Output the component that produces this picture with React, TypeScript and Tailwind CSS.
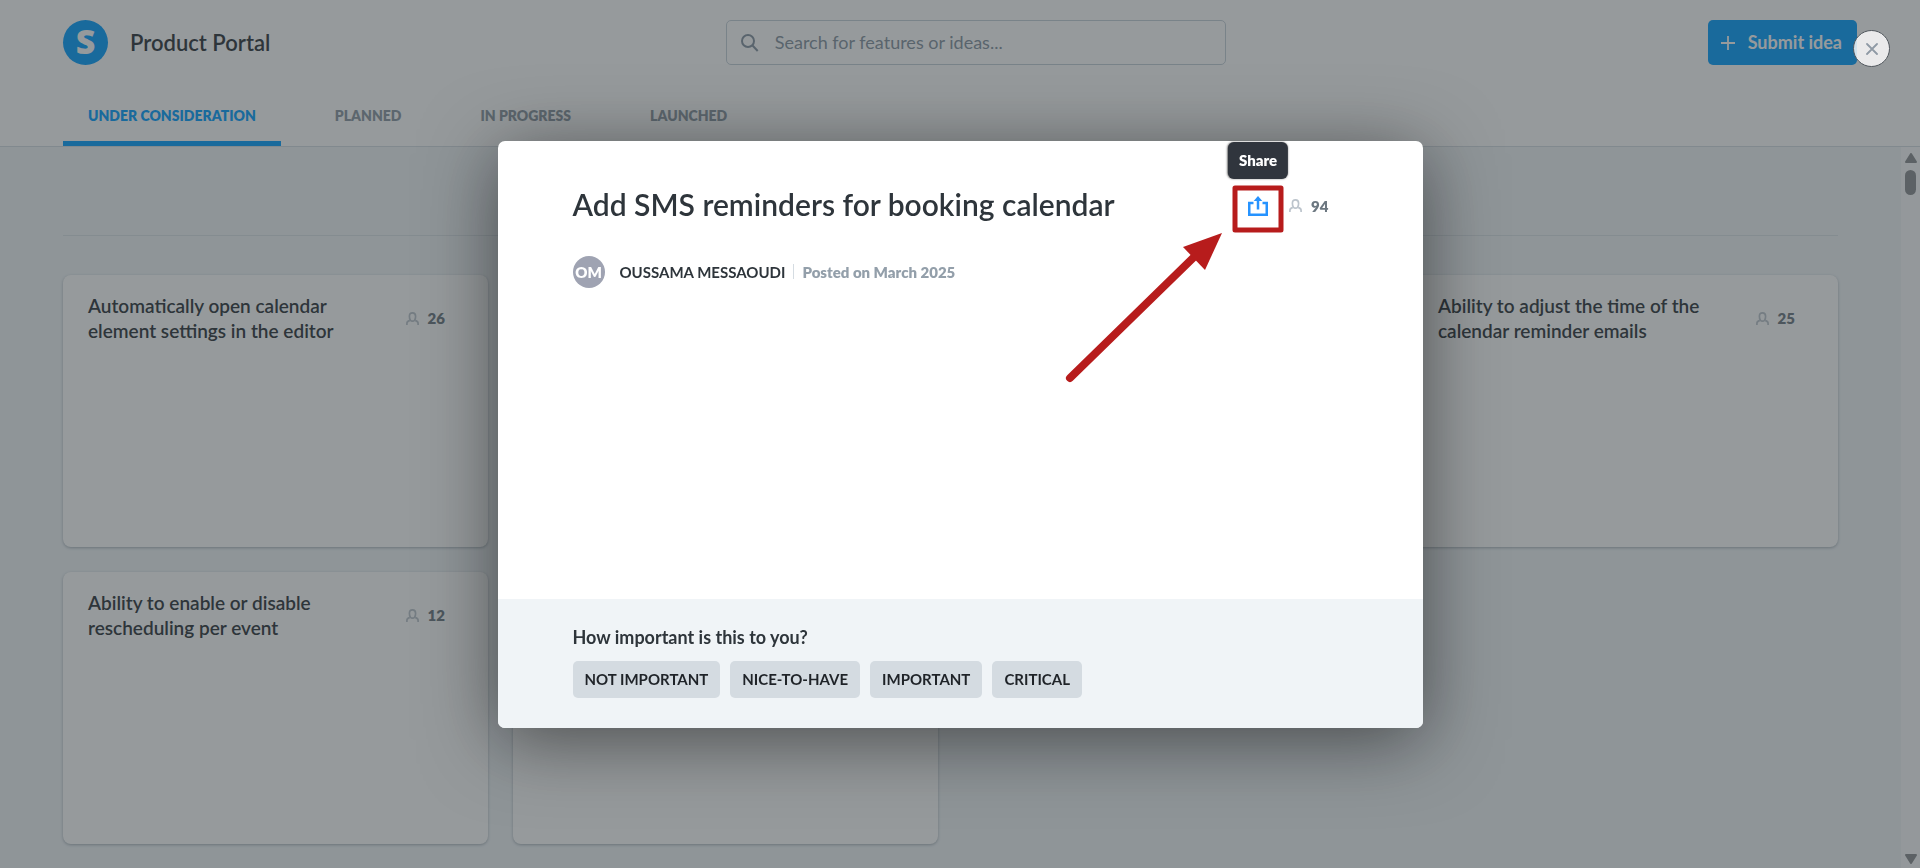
import React, { FunctionComponent } from "react";

type Idea = {
  id: number;
  title: string;
  votes: number | null;
};

const TABS = ["Under consideration", "Planned", "In progress", "Launched"];

const IMPORTANCE = ["Not important", "Nice-to-have", "Important", "Critical"];

const IDEAS: Idea[] = [
  { id: 1, title: "Automatically open calendar element settings in the editor", votes: 26 },
  { id: 2, title: "", votes: null },
  { id: 3, title: "", votes: null },
  { id: 4, title: "Ability to adjust the time of the calendar reminder emails", votes: 25 },
  { id: 5, title: "Ability to enable or disable rescheduling per event", votes: 12 },
  { id: 6, title: "", votes: null },
];

const PersonIcon: FunctionComponent<{ className?: string }> = ({ className }) => (
  <svg viewBox="0 0 13 13" className={className} fill="none" stroke="currentColor" strokeWidth="1.700" aria-hidden="true">
    <path d="M4.400 8.200C3.500 7.200 3.400 6 3.400 4.300 3.400 2 4.600.9 6.500.9s3.100 1.100 3.100 3.400c0 1.700-.1 2.900-1 3.900-.5.6-1.200.9-2.100.9s-1.600-.3-2.100-.9Z" />
    <path d="M.9 13v-1.600c0-1.400.8-2.300 2.900-3M12.100 13v-1.600c0-1.400-.8-2.300-2.900-3" />
  </svg>
);

const SearchIcon = () => (
  <svg viewBox="0 0 18 18" className="size-[18px]" fill="none" stroke="currentColor" strokeWidth="2" aria-hidden="true">
    <circle cx="7" cy="7" r="6" />
    <path d="m11.300 11.300 5.400 5.700" />
  </svg>
);

const ShareIcon = () => (
  <svg viewBox="0 0 20 20" className="size-5" fill="none" stroke="currentColor" strokeWidth="2.500" aria-hidden="true">
    <path d="M5.500 7H1.250v11.750h17.500V7H14.500" />
    <path d="M10 13.500V3" />
    <path d="m10 0 4.300 5H5.700Z" fill="currentColor" stroke="none" />
  </svg>
);

const Votes: FunctionComponent<{ count: number }> = ({ count }) => (
  <div className="flex items-center gap-[9px] text-[15px] leading-5 font-extrabold text-[#6c7780]">
    <PersonIcon className="size-[13px] text-[#bcc4cc]" />
    {count}
  </div>
);

const IdeaCard: FunctionComponent<{ idea: Idea }> = ({ idea }) => (
  <li className="h-[272px] rounded-lg bg-white px-[25px] py-[18px] shadow-[0_1px_3px_rgba(60,80,95,0.4)]">
    {idea.votes !== null && (
      <div className="flex items-center justify-between">
        <h3 className="max-w-[270px] text-[19px] leading-[25px] font-semibold text-[#2e353b]">{idea.title}</h3>
        <div className="mr-[18px]">
          <Votes count={idea.votes} />
        </div>
      </div>
    )}
  </li>
);

const Header = () => (
  <header className="border-b border-[#d5dce2] bg-white px-[63px]">
    <div className="grid grid-cols-[1.05fr_500px_1fr] items-center pt-5">
      <div className="flex items-center gap-[22px]">
        <div className="flex size-[45px] items-center justify-center rounded-full bg-[#059eff] pb-1 font-['Open_Sans'] text-[34px] leading-none font-extrabold text-white">
          S
        </div>
        <h1 className="text-[22px] leading-7 font-semibold text-[#2e353b]">Product Portal</h1>
      </div>
      <label className="flex h-[45px] items-center gap-4 rounded-[5px] border border-[#c5d0d9] px-[14px] text-[#8593a0]">
        <SearchIcon />
        <input
          type="text"
          aria-label="Search"
          placeholder="Search for features or ideas..."
          className="min-w-0 flex-1 text-[18px] outline-none placeholder:text-[#8593a0]"
        />
      </label>
      <button
        type="button"
        className="flex h-[45px] items-center gap-[13px] justify-self-end rounded-[5px] bg-[#059eff] pr-[15px] pl-[13px] text-[18px] font-bold text-white"
      >
        <svg viewBox="0 0 14 14" className="size-[14px]" stroke="currentColor" strokeWidth="1.8" aria-hidden="true">
          <path d="M7 0v14M0 7h14" />
        </svg>
        Submit idea
      </button>
    </div>
    <nav className="flex gap-[29px] pt-[30px]">
      {TABS.map((tab, i) => (
        <a
          key={tab}
          href="#"
          className={
            i === 0
              ? "border-b-[5px] border-[#059eff] px-[25px] pt-[11px] pb-[15px] text-[14px] leading-5 font-extrabold text-[#059eff] uppercase"
              : "border-b-[5px] border-transparent px-[25px] pt-[11px] pb-[15px] text-[14px] leading-5 font-extrabold text-[#8b97a2] uppercase"
          }
        >
          {tab}
        </a>
      ))}
    </nav>
  </header>
);

const Scrollbar = () => (
  <div className="flex w-[19px] shrink-0 flex-col items-center bg-[#fafbfc] pt-[6px] pb-1 text-[#8b8d90]">
    <svg viewBox="0 0 12 10" className="h-[10px] w-3 fill-current stroke-current" strokeLinejoin="round" aria-hidden="true">
      <path d="M6 1 11 9H1Z" strokeWidth="2" />
    </svg>
    <div className="mt-[7px] h-[25px] w-[11px] rounded-full bg-current" />
    <svg viewBox="0 0 12 10" className="mt-auto h-[10px] w-3 fill-current stroke-current" strokeLinejoin="round" aria-hidden="true">
      <path d="M6 9 11 1H1Z" strokeWidth="2" />
    </svg>
  </div>
);

const IdeaModal = () => (
  <div
    role="dialog"
    aria-labelledby="idea-title"
    className="relative w-[925px] rounded-[7px] bg-white shadow-[0_12px_75px_rgba(0,0,0,0.5)]"
  >
    <div className="min-h-[458px] px-[75px] pt-10">
      <div className="flex h-[50px] items-center justify-between">
        <h2 id="idea-title" className="pb-1 text-[30px] leading-10 font-semibold text-[#2e353b]">
          Add SMS reminders for booking calendar
        </h2>
        <div className="mr-[19px] flex items-center gap-[21px]">
          <div className="relative flex">
            <button type="button" aria-describedby="share-tip" aria-label="Share" className="text-[#2693ff]">
              <ShareIcon />
            </button>
            <div
              id="share-tip"
              role="tooltip"
              className="absolute bottom-full left-1/2 mb-[17px] -translate-x-1/2 rounded-md bg-[#30353d] px-[11px] py-2 text-[15px] leading-[21px] font-extrabold text-white shadow-[0_0_2px_rgba(0,0,0,0.5)]"
            >
              Share
            </div>
          </div>
          <Votes count={94} />
        </div>
      </div>
      <div className="mt-[25px] flex h-8 items-center text-[15px] leading-5">
        <div className="flex size-8 items-center justify-center rounded-full bg-[#9fa3b2] font-extrabold text-white">OM</div>
        <span className="ml-[15px] font-bold text-[#2e353b]">OUSSAMA MESSAOUDI</span>
        <span className="mx-2 h-[15px] w-px bg-[#d5dce2]" />
        <span className="font-extrabold text-[#939faa]">Posted on March 2025</span>
      </div>
    </div>
    <div className="rounded-b-[7px] bg-[#f0f4f7] px-[75px] pt-[26px] pb-[30px]">
      <p className="text-[18px] leading-6 font-bold text-[#2e353b]">How important is this to you?</p>
      <div className="mt-3 flex gap-[10px]">
        {IMPORTANCE.map((label) => (
          <button
            key={label}
            type="button"
            className="h-[37px] rounded-[5px] bg-[#d4dbe1] px-3 text-[15px] font-bold text-[#1f2328] uppercase"
          >
            {label}
          </button>
        ))}
      </div>
    </div>
    {/* callout around the share button */}
    <svg
      viewBox="0 0 225 210"
      className="pointer-events-none absolute top-[39px] right-[133px] h-[210px] w-[225px]"
      fill="none"
      stroke="#b71c1c"
      aria-hidden="true"
    >
      <rect x="170" y="8" width="46" height="42" strokeWidth="5" strokeLinejoin="round" />
      <path d="M5 198 128 78" strokeWidth="8" strokeLinecap="round" />
      <path d="M157 53 118 67 140 90Z" fill="#b71c1c" stroke="none" />
    </svg>
  </div>
);

const App = () => (
  <div className="flex min-h-screen flex-col bg-[#f0f4f7] font-[Lato,'Liberation_Sans',sans-serif]">
    <Header />
    <div className="flex flex-1">
      <main className="flex-1 px-[63px]">
        <div className="h-[89px] border-b border-[#dbe2e7]" />
        <ul className="mt-[39px] grid grid-cols-4 gap-[25px]">
          {IDEAS.map((idea) => (
            <IdeaCard key={idea.id} idea={idea} />
          ))}
        </ul>
      </main>
      <Scrollbar />
    </div>
    <div className="fixed inset-0 flex items-center justify-center bg-[#2d353a]/50">
      <IdeaModal />
      <button
        type="button"
        aria-label="Close"
        className="absolute top-[30px] right-[30px] flex size-[37px] items-center justify-center rounded-full border border-[#50565c] bg-white/80 text-[#8f9aa5]"
      >
        <svg viewBox="0 0 12 12" className="size-3" stroke="currentColor" strokeWidth="1.8" strokeLinecap="round" aria-hidden="true">
          <path d="m1 1 10 10M11 1 1 11" />
        </svg>
      </button>
    </div>
  </div>
);

export default App;
